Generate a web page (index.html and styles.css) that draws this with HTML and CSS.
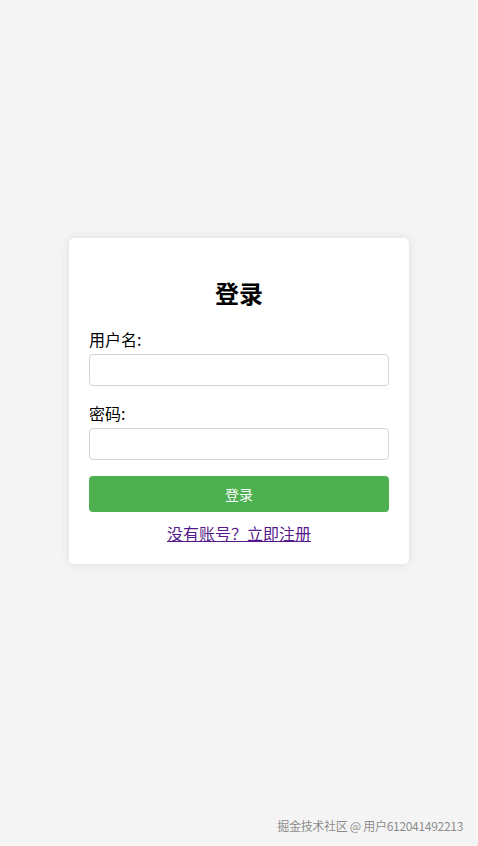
FILE: index.html
```html
<!DOCTYPE html>
<html lang="zh">
<head>
<meta charset="utf-8">
<title>登录</title>
<link rel="stylesheet" href="styles.css">
</head>
<body>
<div class="card">
  <h2 class="title">登录</h2>
  <form class="form">
    <div class="group">
      <label class="label" for="u">用户名:</label>
      <input class="input" id="u" type="text">
    </div>
    <div class="group">
      <label class="label" for="p">密码:</label>
      <input class="input" id="p" type="password">
    </div>
    <button class="btn" type="button">登录</button>
  </form>
  <p class="reg"><a class="reg-link" href="#">没有账号？立即注册</a></p>
</div>
<div class="watermark">掘金技术社区 @ 用户612041492213</div>
</body>
</html>
```
FILE: styles.css
```css
html, body {
  margin: 0;
  padding: 0;
}
body {
  background: #f4f4f4;
  font-family: "Noto Sans CJK SC", "Noto Sans", sans-serif;
  height: 100vh;
  box-sizing: border-box;
  padding-bottom: 44px;
  display: flex;
  align-items: center;
  justify-content: center;
}
.card {
  width: 340px;
  box-sizing: border-box;
  background: #fff;
  border-radius: 5px;
  padding: 20px;
  box-shadow: 0 0 10px rgba(0, 0, 0, 0.1);
}
.title {
  margin: 18px 0 19px;
  font-size: 24px;
  line-height: 34px;
  font-weight: 700;
  text-align: center;
  color: #000;
}
.form {
  margin: 0;
}
.group {
  margin-bottom: 17px;
}
.label {
  display: block;
  font-size: 16px;
  line-height: 20px;
  margin-bottom: 5px;
  color: #000;
}
.input {
  display: block;
  width: 100%;
  height: 32px;
  box-sizing: border-box;
  border: 1px solid #d4d4d4;
  border-radius: 4px;
  padding: 0 8px;
  margin: 0;
  background: #fff;
}
.btn {
  display: block;
  width: 100%;
  height: 36px;
  margin-top: -1px;
  border: none;
  border-radius: 4px;
  background: #4caf50;
  color: #fff;
  font-family: "Noto Sans CJK SC", sans-serif;
  font-size: 14px;
}
.reg {
  margin: 10px 0 0;
  text-align: center;
  font-size: 16px;
  line-height: 22px;
}
.reg-link {
  color: #551a8b;
  text-decoration: underline;
}
.watermark {
  position: absolute;
  right: 15px;
  bottom: 12px;
  font-size: 12px;
  line-height: 16px;
  letter-spacing: -0.3px;
  color: #8a8a8a;
  text-shadow: 0 0 1px #fff;
  font-family: "Noto Sans CJK SC", sans-serif;
}
```
